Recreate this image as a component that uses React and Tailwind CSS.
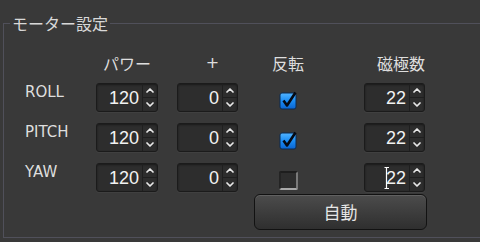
import React from 'react';

const Chevron = ({ up }) => (
  <svg width="8" height="5" viewBox="0 0 8 5" className="block">
    <path
      d={up ? 'M1 4 L4 1 L7 4' : 'M1 1 L4 4 L7 1'}
      fill="none"
      stroke="#e8e8e8"
      strokeWidth="1.7"
      strokeLinecap="round"
      strokeLinejoin="round"
    />
  </svg>
);

// --- SpinBox ---
const SpinBox = ({ value, width, cursor }) => (
  <div
    className={`flex h-[29px] ${width} rounded-[3px] border border-[#1b1b1b] bg-[#2d2d2d] shadow-[inset_0_1px_2px_rgba(0,0,0,0.45),0_1px_0_rgba(255,255,255,0.04)]`}
  >
    <div className="relative flex flex-1 items-center justify-end pr-[3px] font-['Liberation_Sans',sans-serif] text-[18px] leading-none text-[#f2f2f2]">
      {value}
      {cursor && (
        <svg width="6" height="22" viewBox="0 0 6 22" className="absolute left-[19px] top-[3px]">
          <path d="M0.5 0.5 H5 M2.5 0.5 V21.5 M0.5 21.5 H5" stroke="#ffffff" strokeWidth="1.2" fill="none" />
        </svg>
      )}
    </div>
    <div className="flex w-[15px] flex-col border-l border-[#1f1f1f]">
      <div className="flex flex-1 items-center justify-center border-b border-[#1f1f1f]">
        <Chevron up />
      </div>
      <div className="flex flex-1 items-center justify-center">
        <Chevron />
      </div>
    </div>
  </div>
);

// --- CheckBox ---
const CheckBox = ({ checked }) =>
  checked ? (
    <svg width="19" height="19" viewBox="0 0 19 19" className="block">
      <defs>
        <linearGradient id="cbBlue" x1="0" y1="0" x2="0" y2="1">
          <stop offset="0" stopColor="#52b4ff" />
          <stop offset="0.5" stopColor="#1a8cf5" />
          <stop offset="1" stopColor="#0a64d0" />
        </linearGradient>
      </defs>
      <rect x="1" y="2" width="16" height="16" rx="2" fill="url(#cbBlue)" stroke="#0b2a52" strokeWidth="1" />
      <path d="M4.5 9.5 L8 14.5 L16.5 1.5" fill="none" stroke="#050a14" strokeWidth="2.6" strokeLinejoin="round" />
    </svg>
  ) : (
    <div className="h-[19px] w-[19px] rounded-[2px] border-l-2 border-t-2 border-b-2 border-r-2 border-t-[#1e1e1e] border-l-[#242424] border-b-[#a8a8a8] border-r-[#7a7a7a] bg-[#2e2e2e]" />
  );

const rows = [
  { label: 'ROLL', power: 120, plus: 0, rev: true, poles: 22 },
  { label: 'PITCH', power: 120, plus: 0, rev: true, poles: 22 },
  { label: 'YAW', power: 120, plus: 0, rev: false, poles: 22, cursor: true },
];

export default function App() {
  return (
    <div className="h-[242px] w-[480px] overflow-hidden bg-[#393939] font-['DejaVu_Sans','Noto_Sans_CJK_JP',sans-serif] text-[#dedede]">
      <fieldset className="ml-[3px] mt-[14px] h-[224px] w-[500px] border border-[#50505a]">
        <legend className="ml-[6px] px-[2px] font-['Noto_Sans_CJK_JP',sans-serif] text-[16px] leading-[18px] text-[#d8d8d8]">
          モーター設定
        </legend>

        {/* header */}
        <div className="mt-[21px] flex pl-[21px] font-['Noto_Sans_CJK_JP',sans-serif] text-[16px] leading-[20px]">
          <div className="w-[71px]" />
          <div className="w-[62px] text-center">パワー</div>
          <div className="w-[19px]" />
          <div className="w-[61px] pl-[10px] text-center font-['DejaVu_Sans',sans-serif]">+</div>
          <div className="w-[20px]" />
          <div className="w-[60px] text-center">反転</div>
          <div className="w-[46px]" />
          <div className="w-[61px] pl-[13px] text-center">磁極数</div>
        </div>

        {/* rows */}
        <div className="mt-[10px] flex flex-col gap-[11px]">
          {rows.map((r) => (
            <div key={r.label} className="flex items-start pl-[21px]">
              <div className="w-[71px] text-[15px] leading-[18px]">{r.label}</div>
              <SpinBox value={r.power} width="w-[62px]" />
              <div className="w-[19px]" />
              <SpinBox value={r.plus} width="w-[61px]" />
              <div className="w-[20px]" />
              <div className="flex w-[60px] justify-center pt-[8px]">
                <CheckBox checked={r.rev} />
              </div>
              <div className="w-[46px]" />
              <SpinBox value={r.poles} width="w-[61px]" cursor={r.cursor} />
            </div>
          ))}
        </div>

        {/* auto button */}
        <button className="ml-[250px] mt-[2px] flex h-[36px] w-[173px] items-center justify-center rounded-[6px] border border-[#121212] bg-gradient-to-b from-[#4c4c4c] to-[#2f2f2f] font-['Noto_Sans_CJK_JP',sans-serif] text-[17px] text-[#e6e6e6] shadow-[inset_0_1px_0_rgba(255,255,255,0.12)]">
          自動
        </button>
      </fieldset>
    </div>
  );
}
